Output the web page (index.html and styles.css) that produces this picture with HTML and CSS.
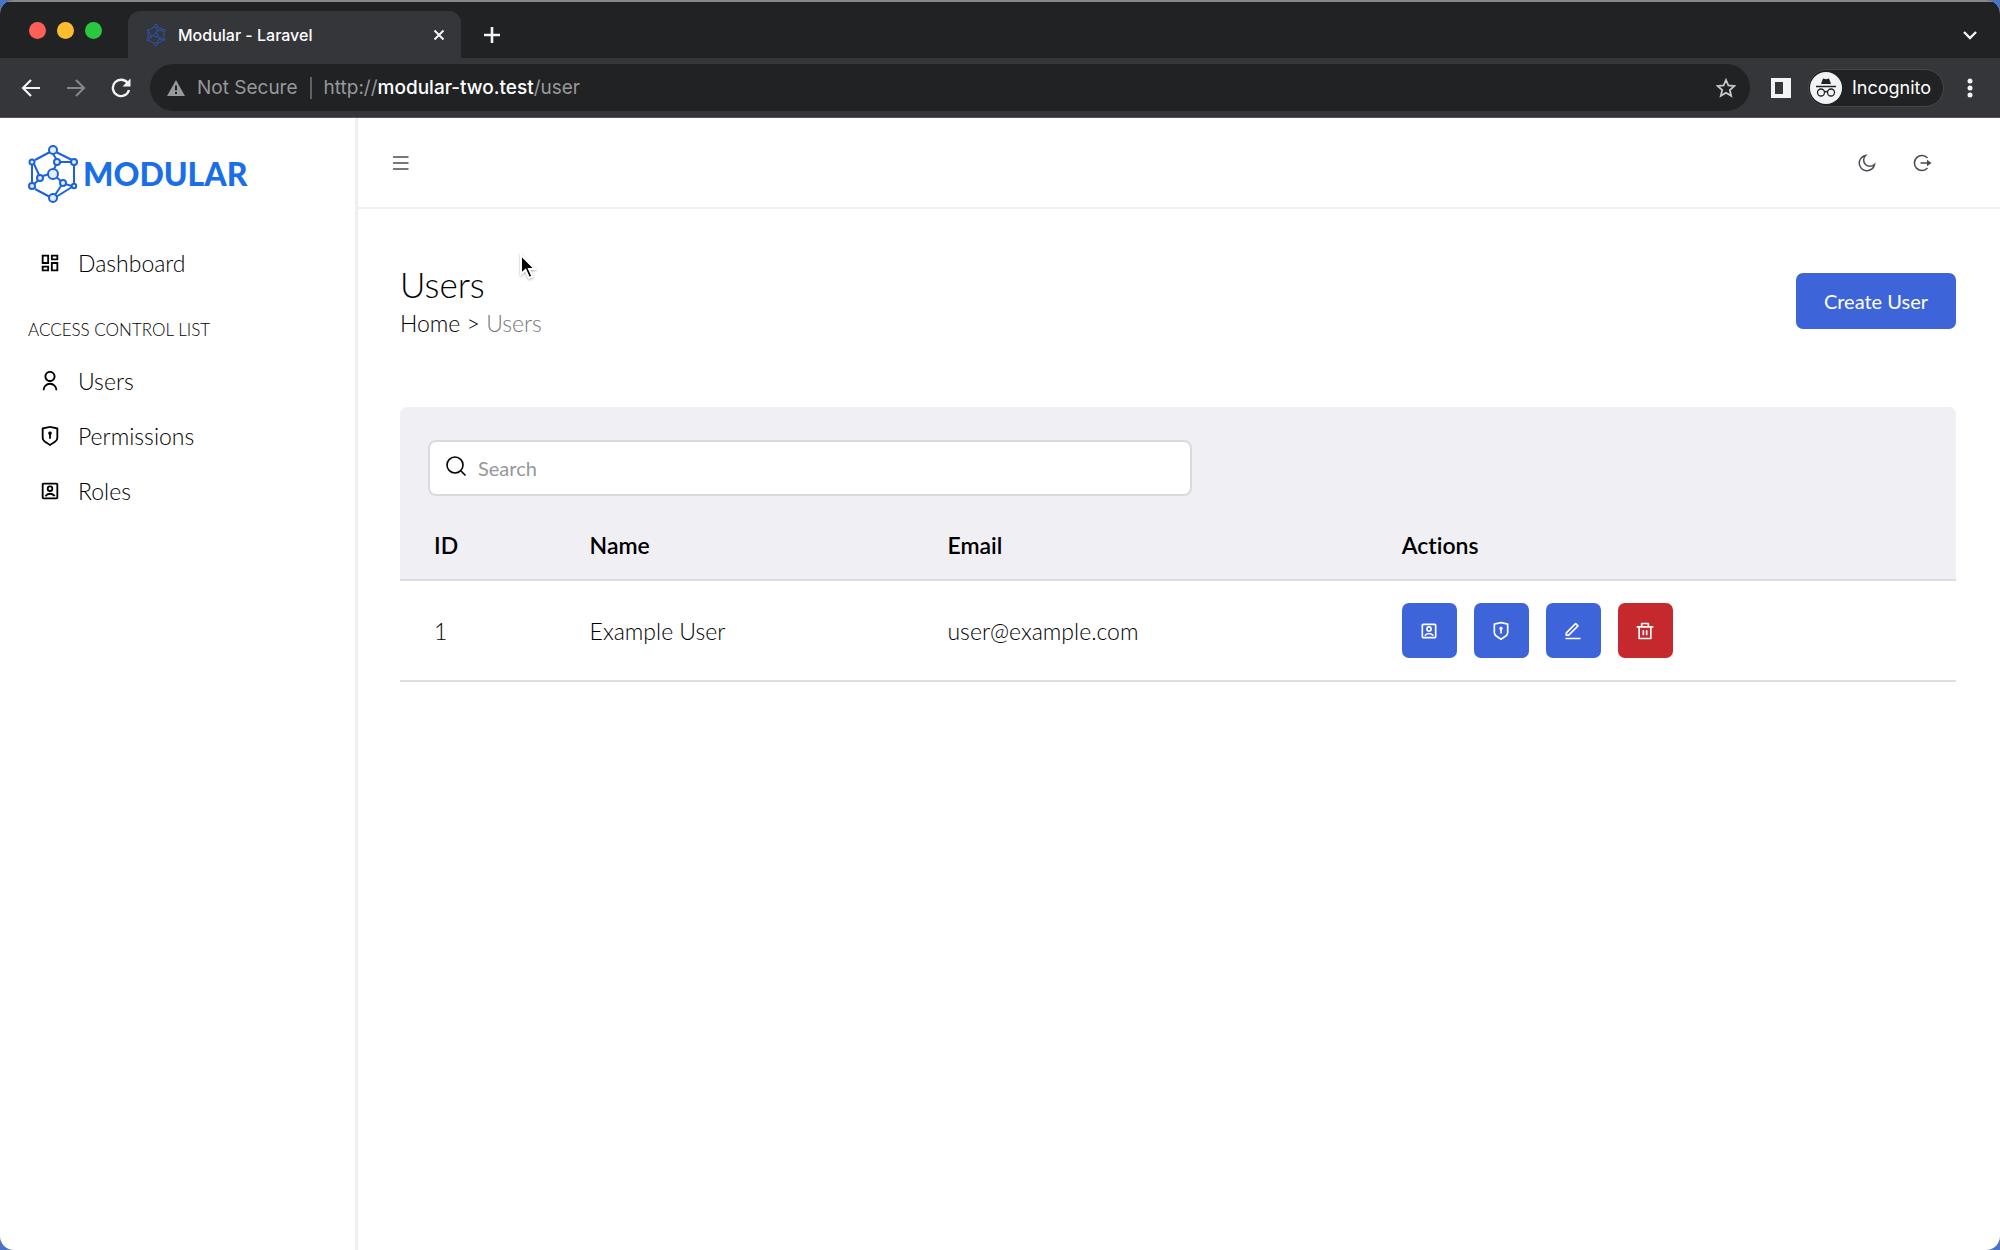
FILE: index.html
```html
<!DOCTYPE html>
<html lang="en">
<head>
    <meta charset="UTF-8">
    <meta name="viewport" content="width=device-width, initial-scale=1.0">
    <title>Modular - Laravel</title>
    <link rel="stylesheet" href="styles.css">
</head>
<body>

    <!-- Shared icons -->
    <svg class="icon-defs" aria-hidden="true">
        <symbol id="icon-dashboard" viewBox="0 0 24 24">
            <path d="M13 21V11h8v10h-8zM3 13V3h8v10H3zm6-2V5H5v6h4zM3 21v-6h8v6H3zm2-2h4v-2H5v2zm10 0h4v-6h-4v6zM13 3h8v6h-8V3zm2 2v2h4V5h-4z"/>
        </symbol>
        <symbol id="icon-user" viewBox="0 0 24 24">
            <path d="M4 22a8 8 0 1 1 16 0h-2a6 6 0 1 0-12 0H4zm8-9c-3.315 0-6-2.685-6-6s2.685-6 6-6 6 2.685 6 6-2.685 6-6 6zm0-2c2.21 0 4-1.79 4-4s-1.79-4-4-4-4 1.79-4 4 1.79 4 4 4z"/>
        </symbol>
        <symbol id="icon-shield" viewBox="0 0 24 24">
            <path d="M12 1l8.217 1.826a1 1 0 0 1 .783.976v9.987a6 6 0 0 1-2.672 4.992L12 23l-6.328-4.219A6 6 0 0 1 3 13.79V3.802a1 1 0 0 1 .783-.976L12 1zm0 2.049L5 4.604v9.185a4 4 0 0 0 1.781 3.328L12 20.597l5.219-3.48A4 4 0 0 0 19 13.79V4.604L12 3.05zM12 7a2 2 0 0 1 1.001 3.732L13 15h-2v-4.268A2 2 0 0 1 12 7z"/>
        </symbol>
        <symbol id="icon-role" viewBox="0 0 24 24">
            <path d="M3 4.995C3 3.893 3.893 3 4.995 3h14.01C20.107 3 21 3.893 21 4.995v14.01A1.995 1.995 0 0 1 19.005 21H4.995A1.995 1.995 0 0 1 3 19.005V4.995zM5 5v14h14V5H5zm2.972 13.18a9.983 9.983 0 0 1-1.751-.978A6.994 6.994 0 0 1 12.102 14c2.4 0 4.517 1.207 5.778 3.047a9.995 9.995 0 0 1-1.724 1.025A4.993 4.993 0 0 0 12.102 16c-1.715 0-3.23.864-4.13 2.18zM12 13a3.5 3.5 0 1 1 0-7 3.5 3.5 0 0 1 0 7zm0-2a1.5 1.5 0 1 0 0-3 1.5 1.5 0 0 0 0 3z"/>
        </symbol>
        <symbol id="icon-edit" viewBox="0 0 24 24">
            <path d="M6.414 16L16.556 5.858l-1.414-1.414L5 14.586V16h1.414zm.829 2H3v-4.243L14.435 2.322a1 1 0 0 1 1.414 0l2.829 2.829a1 1 0 0 1 0 1.414L7.243 18zM3 20h18v2H3v-2z"/>
        </symbol>
        <symbol id="icon-trash" viewBox="0 0 24 24">
            <path d="M17 6h5v2h-2v13a1 1 0 0 1-1 1H5a1 1 0 0 1-1-1V8H2V6h5V3a1 1 0 0 1 1-1h8a1 1 0 0 1 1 1v3zm1 2H6v12h12V8zm-9 3h2v6H9v-6zm4 0h2v6h-2v-6zM9 4v2h6V4H9z"/>
        </symbol>
        <symbol id="icon-molecule" viewBox="0 0 50 58">
            <path d="M22 7L7 15M4 20v19M7 44l15 8M28 52l16-10M46 39V20M44 15L28 7M25 9l4 6M32 17h11M28 20l-3 6M6 19l6 13M15 31l6-2M12 34l-6 5M27 31l7 6M37 39l7 2M33 41l-6 9"/>
            <circle cx="25" cy="5" r="4"/>
            <circle cx="4" cy="17" r="2.5"/>
            <circle cx="46" cy="17" r="3"/>
            <circle cx="29" cy="17" r="3"/>
            <circle cx="25" cy="29" r="5"/>
            <circle cx="12" cy="33" r="3"/>
            <circle cx="4" cy="41" r="3"/>
            <circle cx="35" cy="38" r="3"/>
            <circle cx="46" cy="41" r="2.2"/>
            <circle cx="25" cy="53" r="4"/>
        </symbol>
    </svg>

    <div class="window">

        <!-- Browser bar -->
        <div class="tab-strip">
            <div class="lights">
                <button class="light close" aria-label="Close window"></button>
                <button class="light minimize" aria-label="Minimize window"></button>
                <button class="light zoom" aria-label="Zoom window"></button>
            </div>
            <div class="tab">
                <svg class="favicon"><use href="#icon-molecule"/></svg>
                <span class="tab-title">Modular - Laravel</span>
                <button class="bar-btn" aria-label="Close tab">
                    <svg width="12" height="12" viewBox="0 0 12 12"><path d="M1.5 1.5l9 9M10.5 1.5l-9 9" stroke-width="2"/></svg>
                </button>
            </div>
            <button class="bar-btn new-tab" aria-label="New tab">
                <svg width="18" height="18" viewBox="0 0 18 18"><path d="M9 1v16M1 9h16" stroke-width="2.6"/></svg>
            </button>
            <button class="bar-btn tab-search" aria-label="Search tabs">
                <svg width="16" height="10" viewBox="0 0 16 10"><path d="M2 2l6 6 6-6" stroke-width="2.4"/></svg>
            </button>
        </div>

        <div class="toolbar">
            <div class="nav-btns">
                <button class="bar-btn" aria-label="Back">
                    <svg width="20" height="20" viewBox="0 0 20 20"><path d="M19 10H2M10 2l-8 8 8 8" stroke-width="2.2"/></svg>
                </button>
                <button class="bar-btn dim" aria-label="Forward">
                    <svg width="20" height="20" viewBox="0 0 20 20"><path d="M1 10h17M10 2l8 8-8 8" stroke-width="2.2"/></svg>
                </button>
                <button class="bar-btn" aria-label="Reload">
                    <svg width="20" height="20" viewBox="0 0 20 20"><path d="M17 5.5A8.2 8.2 0 1 0 18 12" stroke-width="2.4"/><path d="M19.5 0.5v8h-8z" class="solid"/></svg>
                </button>
            </div>
            <div class="address">
                <svg class="warning" width="18" height="16" viewBox="0 0 18 16"><path d="M9 0l9 16H0z"/><path d="M9 5.5v5M9 12v2" class="mark"/></svg>
                <span class="security">Not Secure</span>
                <span class="url">http://<b>modular-two.test</b>/user</span>
                <button class="bar-btn star" aria-label="Bookmark this tab">
                    <svg width="20" height="20" viewBox="0 0 20 20"><path d="M10 2l2.4 5.5 6 .5-4.6 4 1.4 5.8-5.2-3.1-5.2 3.1 1.4-5.8-4.6-4 6-.5z" stroke-width="1.8"/></svg>
                </button>
            </div>
            <button class="bar-btn panel-btn" aria-label="Side panel">
                <svg width="22" height="22" viewBox="0 0 22 22"><path d="M1 1h20v20H1zM5 5v12h8V5z" fill-rule="evenodd" class="solid"/></svg>
            </button>
            <button class="incognito">
                <svg width="32" height="32" viewBox="0 0 32 32">
                    <circle cx="16" cy="16" r="16" fill="#f1f3f4"/>
                    <path d="M11 12l2-5.5 3 .8 3-.8 2 5.5z" fill="#202124"/>
                    <path d="M6 14.5h20" stroke="#202124" stroke-width="1.5"/>
                    <g fill="none" stroke="#202124" stroke-width="1.3">
                        <circle cx="11" cy="20.5" r="3.5"/>
                        <circle cx="21" cy="20.5" r="3.5"/>
                        <path d="M14.5 20q1.5-1 3 0"/>
                    </g>
                </svg>
                Incognito
            </button>
            <button class="bar-btn" aria-label="Menu">
                <svg width="6" height="20" viewBox="0 0 6 20"><g class="solid"><circle cx="3" cy="3" r="2.5"/><circle cx="3" cy="10" r="2.5"/><circle cx="3" cy="17" r="2.5"/></g></svg>
            </button>
        </div>

        <!-- Page -->
        <div class="app">
            <aside class="sidebar">
                <a href="#" class="logo">
                    <svg class="logo-mark"><use href="#icon-molecule"/></svg>
                    MODULAR
                </a>
                <nav class="menu">
                    <a href="#" class="menu-item"><svg class="icon"><use href="#icon-dashboard"/></svg>Dashboard</a>
                    <p class="menu-label">ACCESS CONTROL LIST</p>
                    <a href="#" class="menu-item"><svg class="icon"><use href="#icon-user"/></svg>Users</a>
                    <a href="#" class="menu-item"><svg class="icon"><use href="#icon-shield"/></svg>Permissions</a>
                    <a href="#" class="menu-item"><svg class="icon"><use href="#icon-role"/></svg>Roles</a>
                </nav>
            </aside>

            <div class="main">
                <header class="topbar">
                    <button class="top-btn" aria-label="Toggle menu">
                        <svg width="20" height="20" viewBox="0 0 20 20"><path d="M2 4h15.5M2 10h15.5M2 16h15.5"/></svg>
                    </button>
                    <div class="top-actions">
                        <button class="top-btn" aria-label="Dark mode">
                            <svg width="20" height="20" viewBox="0 0 20 20"><path d="M8.5 2.5a7.7 7.7 0 1 0 9 9A6.3 6.3 0 0 1 8.5 2.5z"/></svg>
                        </button>
                        <button class="top-btn" aria-label="Log out">
                            <svg width="20" height="20" viewBox="0 0 20 20"><path d="M15.5 5a7.5 7.5 0 1 0 0 10M8.5 10h8"/><path d="M15 6.8L19.5 10 15 13.2z" class="tip"/></svg>
                        </button>
                    </div>
                </header>

                <main class="content">
                    <div class="page-header">
                        <div>
                            <h1 class="page-title">Users</h1>
                            <div class="breadcrumb"><a href="#">Home</a> &gt; <span>Users</span></div>
                        </div>
                        <button class="btn btn-create">Create User</button>
                    </div>

                    <div class="panel">
                        <div class="search">
                            <label for="search" aria-label="Search">
                                <svg width="22" height="22" viewBox="0 0 22 22"><circle cx="10" cy="10" r="8"/><path d="M16 16l4.5 4.5"/></svg>
                            </label>
                            <input type="text" id="search" placeholder="Search">
                        </div>
                        <table class="users-table">
                            <thead>
                                <tr>
                                    <th class="col-id">ID</th>
                                    <th class="col-name">Name</th>
                                    <th class="col-email">Email</th>
                                    <th>Actions</th>
                                </tr>
                            </thead>
                            <tbody>
                                <tr>
                                    <td>1</td>
                                    <td>Example User</td>
                                    <td>user@example.com</td>
                                    <td>
                                        <div class="actions">
                                            <button class="btn btn-icon" aria-label="Roles"><svg class="icon"><use href="#icon-role"/></svg></button>
                                            <button class="btn btn-icon" aria-label="Permissions"><svg class="icon"><use href="#icon-shield"/></svg></button>
                                            <button class="btn btn-icon" aria-label="Edit"><svg class="icon"><use href="#icon-edit"/></svg></button>
                                            <button class="btn btn-icon btn-danger" aria-label="Delete"><svg class="icon"><use href="#icon-trash"/></svg></button>
                                        </div>
                                    </td>
                                </tr>
                            </tbody>
                        </table>
                    </div>
                </main>
            </div>
        </div>
    </div>

    <!-- Mouse pointer -->
    <svg class="pointer" width="18" height="28" viewBox="0 0 18 28" aria-hidden="true">
        <path d="M2 2v19l4.500-4 3.500 8 3.500-1.500-3.500-7.500h6z"/>
    </svg>
</body>
</html>
```
FILE: styles.css
```css
* {
    margin: 0;
    padding: 0;
    box-sizing: border-box;
}

body {
    min-height: 100vh;
    display: flex;
    background: #4a72c8;
    font-family: Lato, 'Open Sans', sans-serif;
    font-size: 23px;
    font-weight: 300;
    font-variant-ligatures: none;
    line-height: 30px;
    color: #000;
}

button {
    font: inherit;
    border: none;
    background: none;
    cursor: pointer;
}

a {
    color: inherit;
    text-decoration: none;
}

svg {
    display: block;
    flex-shrink: 0;
}

.icon-defs {
    position: absolute;
    width: 0;
    height: 0;
}

.icon {
    width: 22px;
    height: 22px;
    fill: currentColor;
}

/* Browser window */
.window {
    flex: 1;
    display: flex;
    flex-direction: column;
    border-radius: 14px;
    overflow: hidden;
    background: #fff;
}

.tab-strip {
    display: flex;
    height: 58px;
    padding-right: 22px;
    background: #202224;
    border-top: 2px solid #85898b;
    font-family: Inter, Roboto, sans-serif;
    font-weight: 500;
}

.lights {
    display: flex;
    gap: 11px;
    width: 128px;
    padding: 20px 0 0 29px;
}

.light {
    width: 17px;
    height: 17px;
    border-radius: 50%;
}

.light.close {
    background: #ff5f57;
}

.light.minimize {
    background: #febc2e;
}

.light.zoom {
    background: #28c840;
}

.tab {
    display: flex;
    align-items: center;
    width: 333px;
    margin-top: 9px;
    padding: 0 16px 0 18px;
    border-radius: 12px 12px 0 0;
    background: #35363a;
}

.favicon {
    width: 20px;
    height: 22px;
    margin-right: 12px;
    fill: #35363a;
    stroke: #2b56b8;
    stroke-width: 2.5;
}

.tab-title {
    flex: 1;
    font-size: 16px;
    color: #fff;
}

.bar-btn {
    display: flex;
    align-items: center;
    justify-content: center;
    color: #f1f3f4;
}

.bar-btn svg {
    fill: none;
    stroke: currentColor;
}

.bar-btn .solid {
    fill: currentColor;
    stroke: none;
}

.new-tab {
    margin: 9px auto 0 22px;
}

.tab-search {
    margin-top: 9px;
}

.toolbar {
    display: flex;
    align-items: center;
    height: 60px;
    padding: 0 27px 0 21px;
    background: #35363a;
    border-bottom: 1px solid #55565a;
    font-family: Inter, Roboto, sans-serif;
    font-size: 19px;
    font-weight: 400;
}

.nav-btns {
    display: flex;
    gap: 25px;
    width: 129px;
}

.dim {
    color: #85868a;
}

.address {
    flex: 1;
    display: flex;
    align-items: center;
    height: 47px;
    padding: 0 14px 0 17px;
    border-radius: 24px;
    background: #202224;
    color: #96989b;
}

.warning {
    margin-right: 12px;
    fill: #96989b;
}

.warning .mark {
    stroke: #202224;
    stroke-width: 2;
}

.security {
    padding-right: 12px;
    border-right: 2px solid #5f6164;
    line-height: 22px;
}

.url {
    padding-left: 12px;
}

.url b {
    font-weight: 500;
    color: #fff;
}

.star {
    margin-left: auto;
    color: #c6c8ca;
}

.panel-btn {
    margin: 0 16px 0 20px;
}

.incognito {
    display: flex;
    align-items: center;
    gap: 10px;
    height: 38px;
    margin-right: 23px;
    padding: 0 12px 0 1px;
    border: 1px solid #45464a;
    border-radius: 19px;
    background: #202224;
    color: #fff;
    font-size: 18px;
}

/* Layout */
.app {
    flex: 1;
    display: flex;
}

.sidebar {
    width: 358px;
    padding: 27px 28px;
    border-right: 3px solid #efeff2;
}

.logo {
    display: flex;
    align-items: center;
    gap: 5px;
    color: #1a6fe8;
    font-size: 32px;
    font-weight: 900;
}

.logo-mark {
    width: 50px;
    height: 58px;
    fill: #e4edfb;
    stroke: #1c62dc;
    stroke-width: 2;
}

.logo-mark path {
    fill: none;
}

.menu {
    display: flex;
    flex-direction: column;
    margin-top: 32px;
}

.menu-item {
    display: flex;
    align-items: center;
    gap: 17px;
    height: 55px;
    padding-left: 11px;
}

.menu-label {
    margin: 25px 0 8px;
    font-size: 17px;
}

.main {
    flex: 1;
    min-width: 0;
}

.topbar {
    display: flex;
    align-items: center;
    justify-content: space-between;
    height: 91px;
    padding: 0 68px 0 33px;
    border-bottom: 2px solid #efeff4;
}

.top-btn {
    color: #4a4a52;
}

.top-btn svg {
    fill: none;
    stroke: currentColor;
    stroke-width: 1.5;
}

.top-btn .tip {
    fill: currentColor;
    stroke: none;
}

.top-actions {
    display: flex;
    gap: 35px;
}

/* Content */
.content {
    padding: 54px 44px 44px 42px;
}

.page-header {
    display: flex;
    align-items: center;
    justify-content: space-between;
    margin-bottom: 69px;
}

.page-title {
    margin-bottom: 3px;
    font-size: 35px;
    font-weight: 300;
    line-height: 42px;
}

.breadcrumb span {
    color: #77777c;
}

.btn {
    border-radius: 7px;
    background: #3e64da;
    color: #fff;
}

.btn-create {
    height: 56px;
    padding: 0 28px;
    font-size: 20px;
    font-weight: 400;
}

.panel {
    padding-top: 33px;
    border-radius: 7px 7px 0 0;
    background: #f0f0f4;
}

.search {
    display: flex;
    align-items: center;
    width: calc(50% - 14px);
    height: 56px;
    margin-left: 28px;
    padding-left: 15px;
    border: 2px solid #d9d9de;
    border-radius: 8px;
    background: #fff;
}

.search label {
    padding-bottom: 4px;
}

.search svg {
    fill: none;
    stroke: #000;
    stroke-width: 1.6;
}

.search input {
    flex: 1;
    height: 100%;
    padding-left: 11px;
    border: none;
    outline: none;
    background: none;
    font: inherit;
    font-size: 20px;
    font-weight: 400;
}

.search input::placeholder {
    color: #96969b;
}

.users-table {
    width: 100%;
    table-layout: fixed;
    border-collapse: collapse;
    text-align: left;
}

.users-table th,
.users-table td {
    padding: 0 0 0 34px;
    border-bottom: 2px solid #dedee2;
}

.users-table th {
    height: 84px;
    padding-top: 15px;
    font-weight: 600;
}

.users-table td {
    height: 101px;
    background: #fff;
}

.col-id {
    width: 10%;
}

.col-name {
    width: 23%;
}

.col-email {
    width: 29.2%;
}

.actions {
    display: flex;
    gap: 17px;
}

.btn-icon {
    display: flex;
    align-items: center;
    justify-content: center;
    width: 55px;
    height: 55px;
}

.btn-icon .icon {
    width: 20px;
    height: 20px;
}

.btn-danger {
    background: #c5292d;
}

/* Pointer */
.pointer {
    position: absolute;
    top: 253px;
    left: 519px;
    fill: #000;
    stroke: #fff;
    stroke-width: 2;
    filter: drop-shadow(0 1px 1px rgba(0, 0, 0, 0.3));
}
```
